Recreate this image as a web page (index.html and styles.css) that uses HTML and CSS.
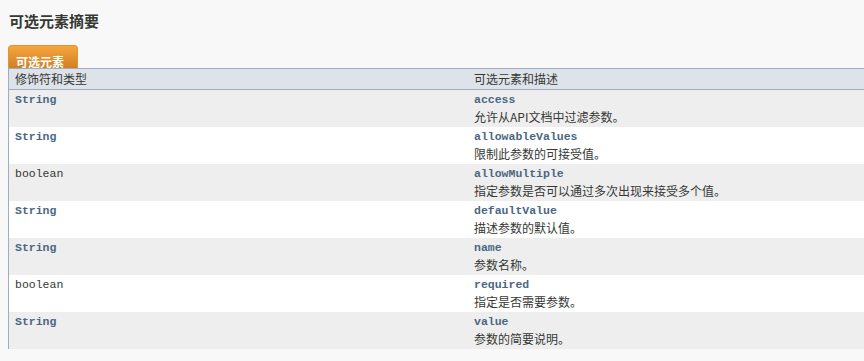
FILE: index.html
```html
<!DOCTYPE html>
<html lang="zh">
<head>
<meta charset="utf-8">
<link rel="stylesheet" href="styles.css">
</head>
<body>
<div class="page">
  <h3 class="title">可选元素摘要</h3>
  <div class="caption"><span class="tab">可选元素</span></div>
  <div class="summary">
    <div class="row head">
      <div class="c1">修饰符和类型</div>
      <div class="c2">可选元素和描述</div>
    </div>
    <div class="row alt">
      <div class="c1"><code class="type link">String</code></div>
      <div class="c2"><code class="member">access</code><div class="desc">允许从API文档中过滤参数。</div></div>
    </div>
    <div class="row">
      <div class="c1"><code class="type link">String</code></div>
      <div class="c2"><code class="member">allowableValues</code><div class="desc">限制此参数的可接受值。</div></div>
    </div>
    <div class="row alt">
      <div class="c1"><code class="type">boolean</code></div>
      <div class="c2"><code class="member">allowMultiple</code><div class="desc">指定参数是否可以通过多次出现来接受多个值。</div></div>
    </div>
    <div class="row">
      <div class="c1"><code class="type link">String</code></div>
      <div class="c2"><code class="member">defaultValue</code><div class="desc">描述参数的默认值。</div></div>
    </div>
    <div class="row alt">
      <div class="c1"><code class="type link">String</code></div>
      <div class="c2"><code class="member">name</code><div class="desc">参数名称。</div></div>
    </div>
    <div class="row">
      <div class="c1"><code class="type">boolean</code></div>
      <div class="c2"><code class="member">required</code><div class="desc">指定是否需要参数。</div></div>
    </div>
    <div class="row alt">
      <div class="c1"><code class="type link">String</code></div>
      <div class="c2"><code class="member">value</code><div class="desc">参数的简要说明。</div></div>
    </div>
  </div>
</div>
</body>
</html>
```
FILE: styles.css
```css
html, body {
  margin: 0;
  padding: 0;
  background: #f8f8f8;
}
body {
  font-family: "Noto Sans CJK SC", "Noto Sans", sans-serif;
  color: #353833;
  font-size: 12px;
}
.page {
  padding: 0 0 0 8px;
}
.title {
  margin: 0;
  padding: 11px 0 0 1px;
  font-size: 15px;
  font-weight: bold;
  line-height: 20px;
  height: 34px;
  box-sizing: content-box;
}
.caption {
  display: flex;
  height: 23px;
}
.tab {
  display: block;
  width: 70px;
  box-sizing: border-box;
  padding: 8px 0 0 7px;
  color: #ffffff;
  font-weight: bold;
  font-size: 12px;
  line-height: 15px;
  background: linear-gradient(#f6a53e, #d08024);
  border-radius: 4px 4px 0 0;
  border: 1px solid #e0962f;
  border-bottom: none;
}
.summary {
  border-left: 1px solid #9eadc0;
}
.row {
  display: grid;
  grid-template-columns: 459px 1fr;
  height: 37px;
  background: #ffffff;
}
.row.alt {
  background: #eeeeef;
}
.row.head {
  height: 20px;
  background: #dee3e9;
  border-top: 1px solid #9eadc0;
  border-bottom: 1px solid #9eadc0;
  line-height: 20px;
}
.head .c1, .head .c2 {
  padding-top: 0;
  font-size: 12px;
}
.c1 {
  padding: 2px 0 0 6px;
}
.c2 {
  padding: 2px 0 0 6px;
}
code {
  display: block;
  font-family: "Liberation Mono", "DejaVu Sans Mono", monospace;
  font-size: 11.5px;
  line-height: 16px;
}
.type {
  color: #353833;
}
.type.link {
  color: #4a6782;
  font-weight: bold;
}
.member {
  color: #4a6782;
  font-weight: bold;
}
.desc {
  line-height: 18px;
  font-size: 12px;
}
```
